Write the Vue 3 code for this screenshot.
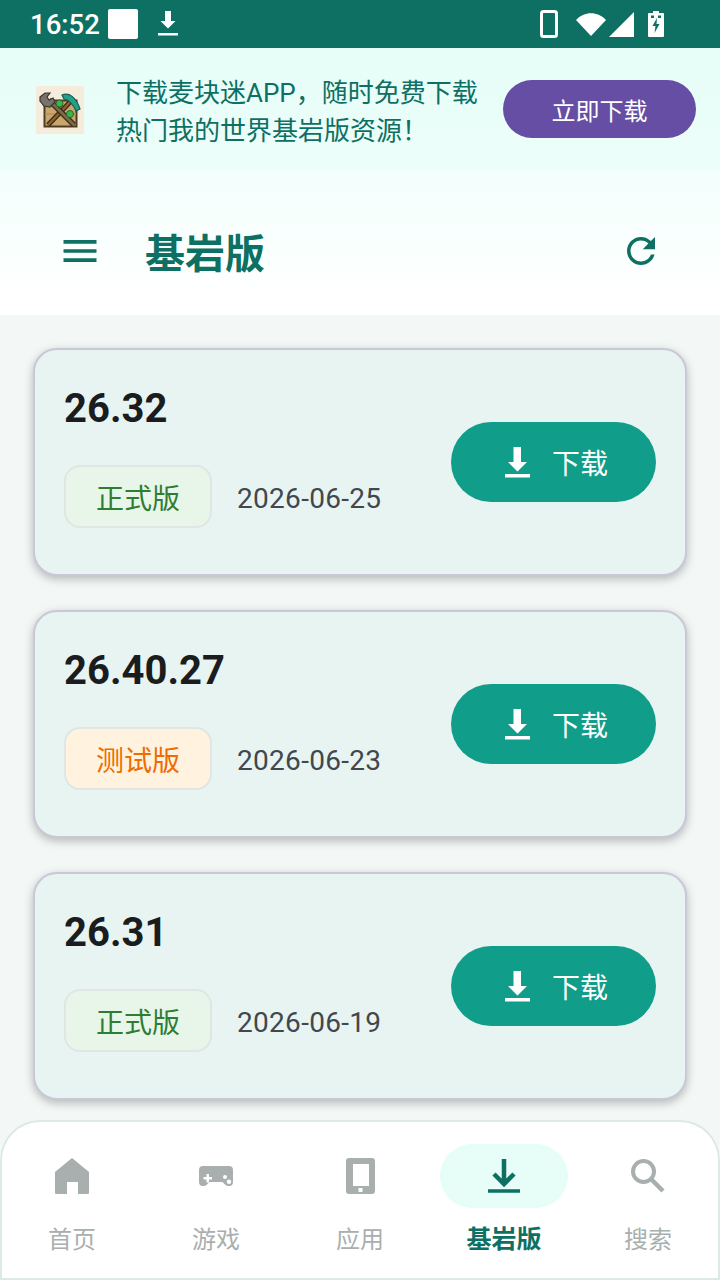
<template>
  <div class="page">
    <div class="status">
      <span class="time">16:52</span>
      <span class="square"></span>
      <svg class="st-dl" width="22" height="28" viewBox="0 0 22 28">
        <path d="M8 1h6v10h4.500L11 18.500 3.500 11H8z M1 23h20v2.500H1z" fill="#fff" />
      </svg>
      <span class="spacer"></span>
      <svg width="18" height="28" viewBox="0 0 18 28">
        <rect x="1.500" y="1.500" width="15" height="25" rx="2" fill="none" stroke="#fff" stroke-width="3" />
      </svg>
      <svg class="st-wifi" width="30" height="23" viewBox="0 0 30 23">
        <path d="M0 7C8 -2 22 -2 30 7L15 23z" fill="#fff" />
      </svg>
      <svg class="st-signal" width="25" height="25" viewBox="0 0 25 25">
        <path d="M25 0v25H0z" fill="#fff" />
      </svg>
      <svg class="st-batt" width="16" height="26" viewBox="0 0 16 26">
        <path d="M5 0h6v2h4a1 1 0 0 1 1 1v22a1 1 0 0 1-1 1H1a1 1 0 0 1-1-1V3a1 1 0 0 1 1-1h4z" fill="#fff" />
        <path d="M9 7 4.500 15h3L6.500 22l5-9h-3z" fill="#0d7063" />
        <path d="M3 4.500h3v2.500H3zM10 4.500h3v2.500h-3z" fill="#0d7063" />
      </svg>
    </div>

    <header class="top">
      <div class="banner">
        <svg class="logo" width="48" height="48" viewBox="0 0 48 48">
          <rect width="48" height="48" fill="#f6ecdc" />
          <rect x="8.500" y="14.500" width="32" height="26" fill="#c9a76c" stroke="#4d3d22" stroke-width="2" />
          <path d="M9 28h31" stroke="#b08f58" stroke-width="1.500" />
          <path d="M12 39 37 13" stroke="#3d2c16" stroke-width="5" />
          <path d="M12 39 37 13" stroke="#8a6233" stroke-width="2.500" />
          <path d="M13 14 38 39" stroke="#3d2c16" stroke-width="5.500" />
          <path d="M13 14 38 39" stroke="#7c6a4c" stroke-width="3" />
          <path d="M4 11 9 7h5l-3 4 2 3 4-2 2 4-5 5-6-1-4-5z" fill="#77726a" stroke="#3a3630" stroke-width="1.200" />
          <path d="M26 9c7-3 14 2 18 14l-4 2c-3-7-7-11-12-12z" fill="#23a08c" stroke="#145c50" stroke-width="1.200" />
          <circle cx="23.500" cy="17.500" r="3.500" fill="#3fb548" stroke="#1d6b2a" />
          <circle cx="34" cy="28" r="3.500" fill="#3fb548" stroke="#1d6b2a" />
        </svg>
        <div class="banner-text">下载麦块迷APP，随时免费下载<br />热门我的世界基岩版资源！</div>
        <button class="get-app">立即下载</button>
      </div>
      <div class="toolbar">
        <svg class="menu" width="44" height="44" viewBox="0 0 24 24">
          <path d="M3 18h18v-2H3v2zm0-5h18v-2H3v2zm0-7v2h18V6H3z" fill="#0d7063" />
        </svg>
        <h1 class="title">基岩版</h1>
        <svg class="refresh" width="42" height="42" viewBox="0 0 24 24">
          <path
            d="M17.650 6.350C16.200 4.900 14.210 4 12 4c-4.420 0-7.990 3.580-7.990 8s3.570 8 7.990 8c3.730 0 6.840-2.550 7.730-6h-2.080c-.82 2.330-3.040 4-5.650 4-3.310 0-6-2.690-6-6s2.690-6 6-6c1.660 0 3.140.69 4.220 1.780L13 11h7V4l-2.350 2.350z"
            fill="#0d7063"
          />
        </svg>
      </div>
    </header>

    <main class="list">
      <div v-for="item in versions" :key="item.name" class="card">
        <div class="info">
          <div class="name">{{ item.name }}</div>
          <div class="meta">
            <span class="tag" :class="item.beta ? 'tag-beta' : 'tag-stable'">{{ item.beta ? "测试版" : "正式版" }}</span>
            <span class="date">{{ item.date }}</span>
          </div>
        </div>
        <button class="download">
          <svg width="25" height="31" viewBox="0 0 25 31">
            <path d="M8.500 0H16v15h6l-9.500 9.500L3 15h5.500zM0 27h25v3.500H0z" fill="#fff" />
          </svg>
          <span>下载</span>
        </button>
      </div>
    </main>

    <nav class="tabs">
      <div v-for="tab in tabs" :key="tab.label" class="tab" :class="{ active: tab.active }">
        <div class="tab-icon">
          <svg v-if="tab.icon === 'home'" width="34" height="36" viewBox="0 0 34 36">
            <path d="M17 0 34 14v21a1 1 0 0 1-1 1H23V24H12v12H1a1 1 0 0 1-1-1V14z" fill="#a9afae" />
          </svg>
          <svg v-if="tab.icon === 'game'" width="36" height="22" viewBox="0 0 36 22">
            <path
              fill-rule="evenodd"
              d="M5 1h26a4 4 0 0 1 4 4v12a4 4 0 0 1-4 4c-2 0-3-.5-4.500-2l-2-2h-13l-2 2C8 20.500 7 21 5 21a4 4 0 0 1-4-4V5a4 4 0 0 1 4-4zM8.500 9v3h-3v2.500h3v3H11v-3h3V12h-3V9zM27 10a2 2 0 1 0 0 4 2 2 0 0 0 0-4zM31 14.500a2.200 2.200 0 1 0 0 4.400 2.200 2.200 0 0 0 0-4.400z"
              fill="#a9afae"
            />
          </svg>
          <svg v-if="tab.icon === 'phone'" width="29" height="36" viewBox="0 0 29 36">
            <path
              fill-rule="evenodd"
              d="M3 0h23a3 3 0 0 1 3 3v30a3 3 0 0 1-3 3H3a3 3 0 0 1-3-3V3a3 3 0 0 1 3-3zM7 6v22h16V6zM12.500 30v4h4v-4z"
              fill="#a9afae"
            />
          </svg>
          <svg v-if="tab.icon === 'download'" width="32" height="34" viewBox="0 0 32 34">
            <path d="M16 0v25M6 15l10 10 10-10" fill="none" stroke="#0d7063" stroke-width="4.500" />
            <path d="M0 32h32" stroke="#0d7063" stroke-width="3.500" />
          </svg>
          <svg v-if="tab.icon === 'search'" width="34" height="34" viewBox="0 0 34 34">
            <circle cx="12.500" cy="12.500" r="10.500" fill="none" stroke="#a9afae" stroke-width="4" />
            <path d="M20.500 20.500 32 32" stroke="#a9afae" stroke-width="4.500" />
          </svg>
        </div>
        <div class="tab-label">{{ tab.label }}</div>
      </div>
    </nav>
  </div>
</template>

<script setup>
const versions = [
  { name: "26.32", date: "2026-06-25", beta: false },
  { name: "26.40.27", date: "2026-06-23", beta: true },
  { name: "26.31", date: "2026-06-19", beta: false },
];

const tabs = [
  { label: "首页", icon: "home" },
  { label: "游戏", icon: "game" },
  { label: "应用", icon: "phone" },
  { label: "基岩版", icon: "download", active: true },
  { label: "搜索", icon: "search" },
];
</script>

<style>
html,
body {
  margin: 0;
  background: #f3f7f6;
}
</style>

<style scoped>
.page {
  width: 720px;
  height: 1280px;
  display: flex;
  flex-direction: column;
  overflow: hidden;
  background: #f3f7f6;
  font-family: Roboto, "Noto Sans CJK SC", sans-serif;
}

.status {
  height: 48px;
  flex: none;
  box-sizing: border-box;
  padding: 0 56px 0 30px;
  display: flex;
  align-items: center;
  background: #0d7063;
  color: #fff;
}
.time {
  font-size: 27.5px;
  font-weight: 500;
  width: 78px;
}
.square {
  width: 30px;
  height: 30px;
  border-radius: 2px;
  background: #fff;
}
.st-dl {
  margin-left: 19px;
}
.spacer {
  flex: 1;
}
.st-wifi {
  margin: 1px 0 0 18px;
}
.st-signal {
  margin-left: 3px;
}
.st-batt {
  margin-left: 14px;
}

.top {
  height: 267px;
  flex: none;
}
.banner {
  height: 122px;
  box-sizing: border-box;
  padding: 0 24px 0 36px;
  display: flex;
  align-items: center;
  background: linear-gradient(#e6fdf8, #edfefa);
}
.logo {
  flex: none;
  margin-top: 2px;
}
.banner-text {
  flex: 1;
  margin: 6px 0 0 32px;
  font-size: 26px;
  line-height: 38px;
  color: #0d7063;
  white-space: nowrap;
}
.get-app {
  flex: none;
  width: 193px;
  height: 58px;
  border: none;
  border-radius: 29px;
  background: #654ea3;
  color: #fff;
  font: inherit;
  font-size: 24px;
}

.toolbar {
  height: 145px;
  box-sizing: border-box;
  padding: 16px 58px 0 58px;
  display: flex;
  align-items: center;
  background: linear-gradient(#f3fffd, #fff 90%);
}
.title {
  flex: 1;
  margin: 0 0 0 43px;
  font-size: 40px;
  font-weight: 700;
  color: #0d7063;
}

.list {
  flex: 1;
  box-sizing: border-box;
  padding: 33px 33px 0;
  display: flex;
  flex-direction: column;
  gap: 34px;
}
.card {
  height: 228px;
  box-sizing: border-box;
  padding: 0 29px;
  display: flex;
  align-items: center;
  justify-content: space-between;
  border: 2px solid #c9c8d6;
  border-radius: 24px;
  background: #e8f4f2;
  box-shadow: 0 3px 10px rgba(0, 0, 0, 0.26);
}
.info {
  padding-bottom: 12px;
}
.name {
  font-size: 40px;
  font-weight: 700;
  line-height: 48px;
  color: #1a1c1e;
}
.meta {
  margin-top: 32px;
  display: flex;
  align-items: center;
  gap: 25px;
}
.tag {
  width: 148px;
  height: 63px;
  box-sizing: border-box;
  padding-top: 1px;
  display: flex;
  align-items: center;
  justify-content: center;
  border: 2px solid #dfe6e3;
  border-radius: 16px;
  font-size: 28px;
}
.tag-stable {
  background: #e8f5e9;
  color: #2e7d32;
}
.tag-beta {
  background: #fff3e0;
  color: #ef6c00;
}
.date {
  margin-top: 4px;
  font-size: 28px;
  letter-spacing: 0.3px;
  color: #41484d;
}
.download {
  width: 205px;
  height: 80px;
  display: flex;
  align-items: center;
  justify-content: center;
  gap: 22px;
  border: none;
  border-radius: 40px;
  background: #109d8a;
  color: #fff;
  font: inherit;
  font-size: 28px;
  padding: 0 0 0 6px;
}

.tabs {
  height: 160px;
  flex: none;
  box-sizing: border-box;
  display: flex;
  padding-top: 24px;
  border-radius: 40px 40px 0 0;
  background: #fff;
  box-shadow: inset 0 0 0 2px #dde9e6;
}
.tab {
  flex: 1;
  display: flex;
  flex-direction: column;
  align-items: center;
}
.tab-icon {
  width: 128px;
  height: 64px;
  display: flex;
  align-items: center;
  justify-content: center;
  border-radius: 32px;
}
.tab.active .tab-icon {
  background: #e6fdf8;
}
.tab-label {
  margin-top: 15px;
  font-size: 24px;
  line-height: 34px;
  color: #a9afae;
}
.tab.active .tab-label {
  font-size: 25px;
  font-weight: 700;
  color: #0d7063;
}
</style>
